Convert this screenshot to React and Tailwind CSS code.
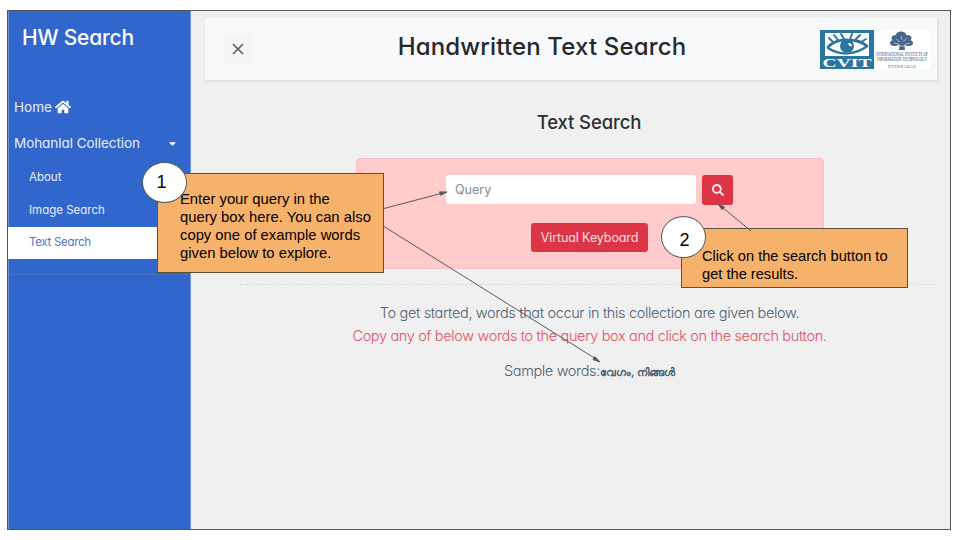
import React from "react";
import { FaHome, FaSearch, FaCaretDown } from "react-icons/fa";

function CvitLogo() {
  return (
    <svg className="block h-[39px] w-[54px]" viewBox="0 0 54 39">
      <rect width="54" height="39" fill="#2b769f" />
      <rect x="5" y="3" width="44" height="23" fill="#fff" />
      <g fill="none" stroke="#2b769f" strokeLinecap="round">
        <path d="M8 17 Q16 9 28 10 Q40 10 47 16" strokeWidth="2.800" />
        <path d="M8 18 Q17 24 28 23.500 Q39 22 46 17" strokeWidth="2.200" />
        <path d="M13 12 L9 8 M18 10 L14 5 M24 9 L21 4 M30 9 L32 4 M36 9 L40 5 M41 12 L46 9" strokeWidth="2" />
      </g>
      <circle cx="27" cy="16" r="7" fill="#2b769f" />
      <path d="M28 13q4 0 4 3-3 1-4-3z" fill="#fff" />
      <text x="27" y="36.500" textAnchor="middle" textLength="49" lengthAdjust="spacingAndGlyphs" fontFamily="Liberation Serif, serif" fontWeight="bold" fontSize="13.500" fill="#fff">CVIT</text>
    </svg>
  );
}

function InstituteLogo() {
  return (
    <svg className="block h-[39px] w-[54px] overflow-visible" viewBox="0 0 54 39">
      <rect width="54" height="39" fill="#fff" />
      <g fill="#46678a">
        <ellipse cx="25" cy="4.500" rx="5" ry="3" />
        <ellipse cx="20" cy="8" rx="4.500" ry="3" />
        <ellipse cx="31" cy="8" rx="4.500" ry="3" />
        <ellipse cx="18.500" cy="13" rx="4.500" ry="3" />
        <ellipse cx="32.500" cy="13" rx="4.500" ry="3" />
        <ellipse cx="25.500" cy="11" rx="6" ry="4" />
        <path d="M24 13h4l1 7h-6z" />
      </g>
      <path d="M20 9l4 3M31 8l-4 4M25 6l1 4M18 13l5 1M34 13l-5 1M22 16h8" stroke="#c3d0df" strokeWidth=".7" />
      <g textAnchor="middle" fontFamily="Liberation Serif, serif" fill="#36577c">
        <text x="26" y="26" fontSize="5.500" textLength="52" lengthAdjust="spacingAndGlyphs">INTERNATIONAL INSTITUTE OF</text>
        <text x="26" y="31" fontSize="5.500" textLength="50" lengthAdjust="spacingAndGlyphs">INFORMATION TECHNOLOGY</text>
        <text x="26" y="38" fontSize="3.800" textLength="28">HYDERABAD</text>
      </g>
    </svg>
  );
}

function Sidebar() {
  return (
    <nav className="flex w-[183px] shrink-0 flex-col border-x border-[#6f93d8] bg-[#3166cc] text-[#e8efff]">
      <h1 className="mt-[13px] ml-[13px] h-7 whitespace-nowrap text-[21px] leading-7 font-medium tracking-[-0.2px] text-white">HW Search</h1>
      <a className="mt-[45px] flex h-5 items-center gap-[3px] pl-[5px] text-[13.500px] leading-5">
        <span>Home</span>
        <FaHome className="size-4 text-white" />
      </a>
      <a className="mt-4 flex h-5 items-center justify-between pr-3 pl-[5px] text-[13.500px] leading-5 whitespace-nowrap">
        <span className="tracking-[-0.05px]">Mohanlal Collection</span>
        <FaCaretDown className="size-[11px] text-white" />
      </a>
      <ul className="mt-2 text-[11.500px]">
        <li className="h-[33px] pl-5 leading-[33px]">About</li>
        <li className="h-[33px] pl-5 leading-[33px]">Image Search</li>
        <li className="-mx-px h-8 bg-white pl-[21px] leading-[31px] tracking-[-0.3px] text-[#4e78c9]">Text Search</li>
      </ul>
      <div className="mt-[15px] border-t border-[#4470bd]" />
    </nav>
  );
}

function Header() {
  return (
    <header className="flex h-[62px] items-center bg-[#f8f9fb] pr-[7px] pl-[18px] shadow-[1px_1px_3px_rgba(0,0,0,0.1)]">
      <button className="flex h-[30px] w-[29px] items-center justify-center bg-[#f5f5f5]">
        <svg className="size-3" viewBox="0 0 12 12" stroke="#555" strokeWidth="1.500">
          <path d="M1 1l10 10M11 1L1 11" />
        </svg>
      </button>
      <h2 className="flex-1 pb-[5px] pl-3 text-center text-[24px] leading-8 font-medium tracking-[0.15px] whitespace-nowrap text-[#25282c]">
        Handwritten Text Search
      </h2>
      <div className="flex gap-[2px]">
        <CvitLogo />
        <InstituteLogo />
      </div>
    </header>
  );
}

function Callouts() {
  return (
    <>
      <div className="absolute top-[173px] left-[157px] h-[100px] w-[227px] border border-[#5b5040] bg-[#f6b26b] pt-4 pl-[22px] font-['Liberation_Sans',sans-serif] text-[14.800px] leading-[18px] whitespace-nowrap text-black">
        Enter your query in the<br />query box here. You can also<br />copy one of example words<br />given below to explore.
      </div>
      <div className="absolute top-[228px] left-[681px] h-[60px] w-[227px] border border-[#5b5040] bg-[#f6b26b] pt-[18px] pl-5 font-['Liberation_Sans',sans-serif] text-[14.650px] leading-[18px] whitespace-nowrap text-black">
        Click on the search button to<br />get the results.
      </div>
      <svg className="pointer-events-none absolute inset-0 h-[540px] w-[960px]" viewBox="0 0 960 540">
        <g stroke="#595959" strokeWidth="1" fill="#595959">
          <path d="M384 208.500L441 193.500M384 226.500L596 359M751 231L722 207" />
          <path d="M447 192l-6.500 3.300-.9-3.400zM600 362l-7-2.400 1.900-3zM718 204l6.500 3-2.300 2.800z" />
        </g>
      </svg>
      <div className="absolute top-[162px] left-[142px] flex h-[41px] w-[45px] items-center justify-center rounded-[50%] border border-[#595959] bg-white pr-[6px] font-['Liberation_Sans',sans-serif] text-[18px] text-black">1</div>
      <div className="absolute top-[216px] left-[661px] flex h-[42px] w-[45px] items-center justify-center rounded-[50%] border border-[#595959] bg-white pt-[7px] pl-[2px] font-['Liberation_Sans',sans-serif] text-[18px] text-black">2</div>
    </>
  );
}

export default function App() {
  return (
    <div className="relative h-[540px] w-[960px] overflow-hidden bg-white pt-[10px] pl-[7px] font-['Inter',sans-serif] [font-feature-settings:'cv11']">
      <div className="flex h-[520px] w-[944px] border border-[#555558] bg-[#f0f0f0]">
        <Sidebar />
        <main className="min-w-0 flex-1 pt-[7px] pr-[13px] pl-[14px]">
          <Header />
          <h3 className="mt-[30px] pl-[36px] text-center text-[18.500px] leading-6 font-medium tracking-[-0.1px] text-[#2c3034]">Text Search</h3>
          <section className="mt-6 ml-[151px] h-[111px] w-[468px] rounded-[3px] border border-[#f3c3c8] bg-[#ffcbcb] pt-4">
            <div className="ml-[89px] flex gap-[6px]">
              <input placeholder="Query" className="h-[29px] w-[250px] rounded-[3px] bg-white px-[9px] text-[12.500px] placeholder:text-[#868c93] placeholder:opacity-100" />
              <button className="flex h-[30px] w-[31px] items-center justify-center rounded-[3px] bg-[#dc3545] text-[#ffe8ea]">
                <FaSearch className="size-3" />
              </button>
            </div>
            <button className="mt-[18px] ml-[174px] block h-[29px] w-[117px] rounded-[3px] bg-[#dc3545] pt-px text-[12.500px] tracking-[-0.1px] whitespace-nowrap text-[#ffdfe2]">Virtual Keyboard</button>
          </section>
          <div className="mt-[15px] ml-[35px] border-t border-dashed border-[#dfdfdf]" />
          <div className="ml-[37px] pt-4 text-center text-[14.500px] leading-[23px] font-[350] tracking-[-0.35px] whitespace-nowrap text-[#4d6170]">
            <p>To get started, words that occur in this collection are given below.</p>
            <p className="text-[#e25263]">Copy any of below words to the query box and click on the search button.</p>
            <p className="mt-3">Sample words:<span className="text-[11px] font-semibold tracking-normal">വേഗം, നിങ്ങൾ</span></p>
          </div>
        </main>
      </div>
      <Callouts />
    </div>
  );
}
